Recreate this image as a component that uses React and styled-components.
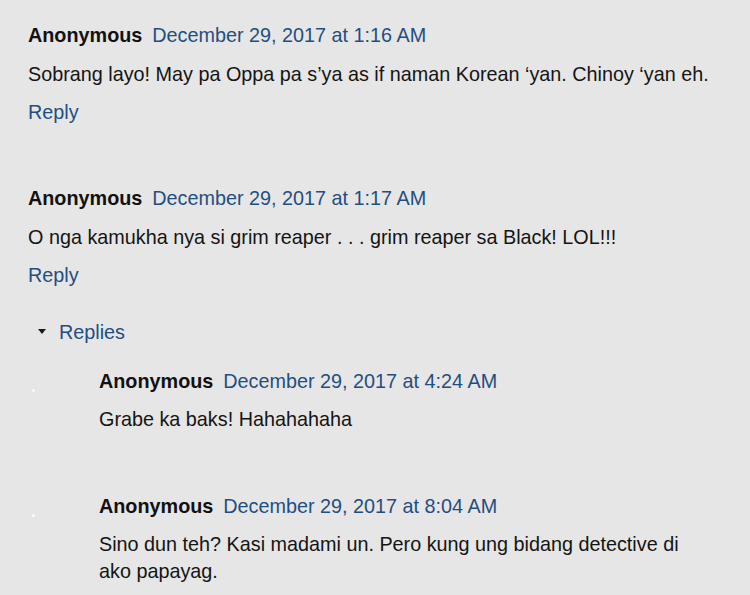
import styled, { createGlobalStyle } from "styled-components"

const GlobalStyle = createGlobalStyle`
  html, body {
    margin: 0;
    padding: 0;
    background: #e6e6e6;
  }
  body {
    font-family: "Liberation Sans", Arial, sans-serif;
  }
`

const comments = [
  {
    id: 1,
    author: "Anonymous",
    date: "December 29, 2017 at 1:16 AM",
    text: "Sobrang layo! May pa Oppa pa s\u2019ya as if naman Korean \u2018yan. Chinoy \u2018yan eh.",
    replies: [],
  },
  {
    id: 2,
    author: "Anonymous",
    date: "December 29, 2017 at 1:17 AM",
    text: "O nga kamukha nya si grim reaper . . . grim reaper sa Black! LOL!!!",
    replies: [
      {
        id: 3,
        author: "Anonymous",
        date: "December 29, 2017 at 4:24 AM",
        text: "Grabe ka baks! Hahahahaha",
      },
      {
        id: 4,
        author: "Anonymous",
        date: "December 29, 2017 at 8:04 AM",
        text: "Sino dun teh? Kasi madami un. Pero kung ung bidang detective di ako papayag.",
      },
    ],
  },
]

export default function App() {
  return (
    <>
      <GlobalStyle />
      <Thread>
        {comments.map((c) => (
          <Comment key={c.id}>
            <Header>
              <Author>{c.author}</Author>
              <DateLink href="#">{c.date}</DateLink>
            </Header>
            <Body>{c.text}</Body>
            <ReplyLink href="#">Reply</ReplyLink>
            {c.replies.length > 0 && (
              <>
                <RepliesToggle>
                  <Caret />
                  <ToggleText href="#">Replies</ToggleText>
                </RepliesToggle>
                <ReplyList>
                  {c.replies.map((r) => (
                    <ReplyItem key={r.id}>
                      <Marker>
                        <Dot />
                      </Marker>
                      <ReplyContent>
                        <Header>
                          <Author>{r.author}</Author>
                          <DateLink href="#">{r.date}</DateLink>
                        </Header>
                        <Body $nested>{r.text}</Body>
                      </ReplyContent>
                    </ReplyItem>
                  ))}
                </ReplyList>
              </>
            )}
          </Comment>
        ))}
      </Thread>
    </>
  )
}

const Thread = styled.div`
  padding: 22px 0 0 28px;
  width: 700px;
  font-size: 19.8px;
  line-height: 26px;
  color: #111;
`

const Comment = styled.div`
  display: flex;
  flex-direction: column;
  align-items: flex-start;
  margin-bottom: 60px;
`

const Header = styled.div`
  display: flex;
  gap: 10px;
  white-space: nowrap;
`

const Author = styled.span`
  font-weight: bold;
  color: #111;
`

const DateLink = styled.a`
  color: #1f4e82;
  text-decoration: none;
`

const Body = styled.div`
  margin-top: ${(p) => (p.$nested ? "12px" : "13px")};
  color: #141414;
  line-height: ${(p) => (p.$nested ? "27px" : "26px")};
`

const ReplyLink = styled.a`
  margin-top: 12px;
  color: #1f4e82;
  text-decoration: none;
`

const RepliesToggle = styled.div`
  display: flex;
  align-items: center;
  margin-top: 31px;
  padding-left: 10px;
`

const Caret = styled.span`
  width: 0;
  height: 0;
  border-left: 4.5px solid transparent;
  border-right: 4.5px solid transparent;
  border-top: 5px solid #1a1a1a;
  margin-right: 13px;
  margin-top: -2px;
`

const ToggleText = styled.a`
  color: #1f4e82;
  text-decoration: none;
`

const ReplyList = styled.div`
  display: flex;
  flex-direction: column;
  gap: 60px;
  margin-top: 23px;
  align-self: stretch;
`

const ReplyItem = styled.div`
  display: flex;
`

const Marker = styled.div`
  box-sizing: border-box;
  width: 71px;
  flex-shrink: 0;
  padding-top: 21px;
  padding-left: 4px;
`

const Dot = styled.div`
  width: 3px;
  height: 3px;
  border-radius: 50%;
  background: #fafafa;
`

const ReplyContent = styled.div`
  flex: 1;
  padding-right: 25px;
`
